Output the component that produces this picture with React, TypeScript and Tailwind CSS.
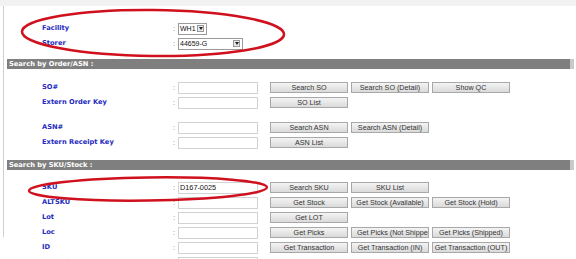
import React from "react";

const labelCls =
  "w-[131px] shrink-0 text-[6.7px] font-bold text-[#1f2bbf] leading-none [font-family:'DejaVu_Sans',Verdana,sans-serif]";

function Colon() {
  return (
    <div className="w-[5px] shrink-0 text-[8px] text-[#888] leading-none [font-family:'Liberation_Sans',Arial,sans-serif]">
      :
    </div>
  );
}

function Btn({ text, left }: { text: string; left?: boolean }) {
  return (
    <div
      className={
        "w-[78px] h-[11px] shrink-0 flex items-center overflow-hidden whitespace-nowrap border border-[#a8a8a8] bg-gradient-to-b from-[#f4f4f4] to-[#dadada] text-[7.2px] text-[#333] leading-none [font-family:'Liberation_Sans',Arial,sans-serif] " +
        (left ? "justify-start pl-[5px]" : "justify-center")
      }
    >
      {text}
    </div>
  );
}

function Input({ value }: { value?: string }) {
  return (
    <div className="w-[80px] h-[12px] shrink-0 border border-[#d2d2d2] bg-white flex items-center pl-[1px] text-[7.3px] text-[#111] leading-none [font-family:'Liberation_Sans',Arial,sans-serif]">
      {value}
    </div>
  );
}

function Row({
  label,
  value,
  buttons,
}: {
  label: string;
  value?: string;
  buttons?: { t: string; left?: boolean }[];
}) {
  return (
    <div className="h-[15px] flex items-center pl-[38px]">
      <div className={labelCls}>{label}</div>
      <Colon />
      <Input value={value} />
      <div className="flex gap-[3px] ml-[12px]">
        {(buttons || []).map((b, i) => (
          <Btn key={i} text={b.t} left={b.left} />
        ))}
      </div>
    </div>
  );
}

function Bar({ title }: { title: string }) {
  return (
    <div className="flex items-stretch h-[10px] ml-[3px]">
      <div className="w-[563px] bg-[#7f7f7f] flex items-center pl-[2px] text-[6.7px] font-bold text-white leading-none [font-family:'DejaVu_Sans',Verdana,sans-serif]">
        {title}
      </div>
      <div className="w-[4px] bg-[#c9c9c9]" />
    </div>
  );
}

function Select({ value, w }: { value: string; w: string }) {
  return (
    <div
      className={
        "h-[12px] shrink-0 border border-[#9a9a9a] bg-white flex items-center justify-between pl-[1px] pr-[2px] text-[7px] text-[#111] leading-none [font-family:'Liberation_Sans',Arial,sans-serif] " +
        w
      }
    >
      <span>{value}</span>
      <div className="w-[7px] h-[7px] border border-[#999] bg-[#e8e8e8] flex items-center justify-center">
        <svg width="4" height="3" viewBox="0 0 4 3">
          <path d="M0 0 L4 0 L2 3 Z" fill="#222" />
        </svg>
      </div>
    </div>
  );
}

export default function App() {
  return (
    <div className="relative w-[576px] h-[259px] overflow-hidden bg-white">
      <div className="h-[6px] bg-[#f2f2f2]" />
      <div className="flex">
        <div className="w-[3px] shrink-0" />
        <div className="w-[1px] h-[231px] shrink-0 bg-[#cfcfcf]" />
        <div className="flex-1 flex flex-col">
          <div className="h-[15px]" />
          <div className="h-[15px] flex items-center pl-[38px]">
            <div className={labelCls}>Facility</div>
            <Colon />
            <Select value="WH1" w="w-[29px]" />
          </div>
          <div className="h-[15px] flex items-center pl-[38px]">
            <div className={labelCls}>Storer</div>
            <Colon />
            <Select value="44659-G" w="w-[65px]" />
          </div>
          <div className="h-[8px]" />
          <Bar title="Search by Order/ASN :" />
          <div className="h-[11px]" />
          <Row
            label="SO#"
            buttons={[{ t: "Search SO" }, { t: "Search SO (Detail)" }, { t: "Show QC" }]}
          />
          <Row label="Extern Order Key" buttons={[{ t: "SO List" }]} />
          <div className="h-[10px]" />
          <Row label="ASN#" buttons={[{ t: "Search ASN" }, { t: "Search ASN (Detail)" }]} />
          <Row label="Extern Receipt Key" buttons={[{ t: "ASN List" }]} />
          <div className="h-[10px]" />
          <Bar title="Search by SKU/Stock :" />
          <div className="h-[10px]" />
          <Row label="SKU" value="D167-0025" buttons={[{ t: "Search SKU" }, { t: "SKU List" }]} />
          <Row
            label="ALTSKU"
            buttons={[
              { t: "Get Stock" },
              { t: "Get Stock (Available)" },
              { t: "Get Stock (Hold)" },
            ]}
          />
          <Row label="Lot" buttons={[{ t: "Get LOT" }]} />
          <Row
            label="Loc"
            buttons={[
              { t: "Get Picks" },
              { t: "Get Picks (Not Shipped)", left: true },
              { t: "Get Picks (Shipped)" },
            ]}
          />
          <Row
            label="ID"
            buttons={[
              { t: "Get Transaction" },
              { t: "Get Transaction (IN)" },
              { t: "Get Transaction (OUT)" },
            ]}
          />
          <Row label="Lottable" />
        </div>
      </div>
      <svg
        className="absolute left-0 top-0 pointer-events-none"
        width="576"
        height="259"
        viewBox="0 0 576 259"
      >
        <ellipse
          cx="153"
          cy="33"
          rx="131"
          ry="23"
          fill="none"
          stroke="#d0101c"
          strokeWidth="2.5"
          transform="rotate(0.6 153 33)"
        />
        <ellipse
          cx="148"
          cy="189"
          rx="119"
          ry="11.5"
          fill="none"
          stroke="#d0101c"
          strokeWidth="2.5"
          transform="rotate(-0.8 148 189)"
        />
      </svg>
    </div>
  );
}
